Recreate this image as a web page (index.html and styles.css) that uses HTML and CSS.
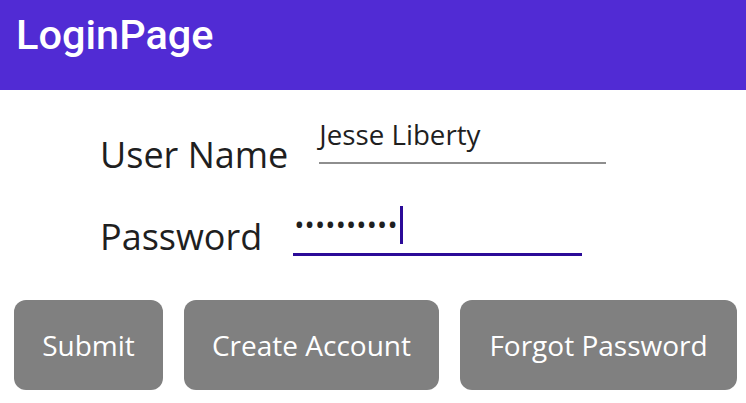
FILE: index.html
```html
<!DOCTYPE html>
<html>
<head>
<meta charset="utf-8">
<link rel="stylesheet" href="styles.css">
</head>
<body>
<header class="appbar"><h1 class="title">LoginPage</h1></header>
<main class="form">
  <div class="row row-user">
    <span class="label label-user">User Name</span>
    <div class="entry entry-user"><span class="value">Jesse Liberty</span></div>
  </div>
  <div class="row row-pass">
    <span class="label label-pass">Password</span>
    <div class="entry entry-pass"><span class="dots">••••••••••</span><span class="caret"></span></div>
  </div>
</main>
<div class="buttons">
  <button class="btn btn-submit">Submit</button>
  <button class="btn btn-create">Create Account</button>
  <button class="btn btn-forgot">Forgot Password</button>
</div>
</body>
</html>
```
FILE: styles.css
```css
html, body { margin: 0; padding: 0; background: #ffffff; }
body { width: 746px; height: 403px; overflow: hidden; font-family: "Open Sans", "Noto Sans", sans-serif; }
.appbar { height: 90px; background: #512bd4; padding-left: 16px; box-sizing: border-box; }
.title { margin: 0; padding-top: 12px; font-family: Roboto, "Noto Sans", sans-serif; font-weight: 500; font-size: 41.5px; line-height: 46px; color: #ffffff; }
.form { height: 210px; box-sizing: border-box; padding: 28px 0 0 100px; }
.row { display: flex; gap: 30px; align-items: flex-start; }
.label { font-size: 36px; line-height: 40px; color: #1f1f1f; }
.label-user { margin-top: 17px; }
.entry-user { width: 287px; border-bottom: 2px solid #8e8e8e; padding-bottom: 12px; margin-left: 1px; }
.entry-user .value { display: block; font-size: 27.7px; line-height: 32px; color: #1f1f1f; }
.row-pass { margin-top: 31px; }
.label-pass { margin-top: 11px; }
.entry-pass { width: 288px; height: 47px; border-bottom: 3px solid #2b0b98; display: flex; align-items: flex-start; padding-left: 1px; margin-left: 1px; }
.dots { font-size: 27px; line-height: 38px; color: #1f1f1f; letter-spacing: 0.2px; }
.caret { width: 3px; height: 38px; background: #2b0b98; margin-left: 2px; }
.buttons { display: flex; gap: 21px; padding-left: 14px; }
.btn { height: 90px; border: none; border-radius: 12px; background: #808080; color: #ffffff; font-family: "Open Sans", "Noto Sans", sans-serif; font-size: 28px; padding: 0; }
.btn-submit { width: 149px; }
.btn-create { width: 255px; }
.btn-forgot { width: 277px; }
```
